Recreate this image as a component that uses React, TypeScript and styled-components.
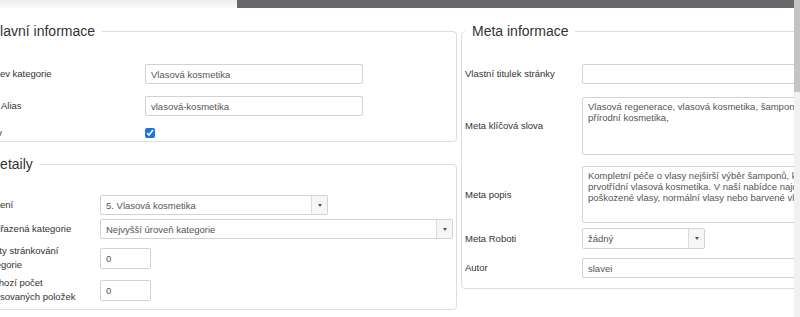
import styled, { createGlobalStyle } from "styled-components";

const GlobalStyle = createGlobalStyle`
  html, body {
    margin: 0;
    height: 100%;
    background: #fff;
    overflow: hidden;
  }
  body {
    font-family: "Liberation Sans", Arial, sans-serif;
    font-size: 9.5px;
    color: #333;
  }
`;

const Page = styled.div`
  display: flex;
  height: 317px;
`;

const Main = styled.div`
  flex: 1;
  min-width: 0;
  overflow: hidden;
`;

const TopBar = styled.div`
  display: flex;
  height: 8px;
`;

const TopFade = styled.div`
  width: 237px;
  background: linear-gradient(#ececec, #fbfbfb);
`;

const TopDark = styled.div`
  flex: 1;
  background: #68686c;
`;

const Columns = styled.div`
  display: grid;
  grid-template-columns: 478px 478px;
  column-gap: 4px;
  align-items: start;
  margin: 15px 0 0 -21px;
`;

const Column = styled.div`
  display: flex;
  flex-direction: column;
`;

const Panel = styled.fieldset<{ $mt?: number; $pb: number }>`
  margin: ${(p) => p.$mt ?? 0}px 0 0;
  padding: 0 3px ${(p) => p.$pb}px;
  border: 1px solid #dddddd;
  border-radius: 4px;
  min-width: 0;
`;

const Legend = styled.legend`
  padding: 0 7px;
  font-size: 14px;
  line-height: 16px;
  color: #333;
`;

const Row = styled.div<{ $label: number; $mt: number }>`
  display: grid;
  grid-template-columns: ${(p) => p.$label}px 1fr;
  align-items: center;
  margin-top: ${(p) => p.$mt}px;
`;

const Label = styled.label<{ $indent?: number }>`
  padding: 0 8px 0 ${(p) => p.$indent ?? 0}px;
  line-height: 14px;
  color: #333;
`;

const TextInput = styled.input<{ $w?: number; $h?: number }>`
  box-sizing: border-box;
  width: ${(p) => (p.$w ? `${p.$w}px` : "100%")};
  height: ${(p) => p.$h ?? 20}px;
  margin: 0;
  padding: 0 5px;
  border: 1px solid #d2d2d2;
  border-radius: 2px;
  background: #fff;
  font-family: inherit;
  font-size: 9.5px;
  color: #555;
  outline: none;
`;

const TextArea = styled.textarea<{ $h: number }>`
  box-sizing: border-box;
  display: block;
  width: 100%;
  height: ${(p) => p.$h}px;
  margin: 0;
  padding: 3px 5px;
  border: 1px solid #d2d2d2;
  border-radius: 2px;
  font-family: inherit;
  font-size: 9.5px;
  line-height: 11px;
  color: #555;
  resize: none;
  overflow: hidden;
  outline: none;
`;

const SelectBox = styled.div<{ $w?: number; $h?: number }>`
  box-sizing: border-box;
  display: flex;
  width: ${(p) => (p.$w ? `${p.$w}px` : "100%")};
  height: ${(p) => p.$h ?? 20}px;
  border: 1px solid #d2d2d2;
  border-radius: 2px;
  background: #fff;
  color: #555;
`;

const SelectValue = styled.span`
  flex: 1;
  display: flex;
  align-items: center;
  padding: 0 5px;
  white-space: nowrap;
  overflow: hidden;
`;

const SelectArrow = styled.span`
  width: 15px;
  display: flex;
  align-items: center;
  justify-content: center;
  border-left: 1px solid #dcdcdc;
  background: #f6f6f6;

  &::after {
    content: "";
    border-left: 2.5px solid transparent;
    border-right: 2.5px solid transparent;
    border-top: 3px solid #555;
  }
`;

const Check = styled.input`
  width: 10px;
  height: 10px;
  margin: 0;
  accent-color: #1a73e8;
`;

const Scrollbar = styled.div`
  width: 6px;
  background: #f1f1f1;
`;

const Thumb = styled.div`
  height: 92px;
  background: #c4c4c4;
`;

function Select({ value, w, h }: { value: string; w?: number; h?: number }) {
  return (
    <SelectBox $w={w} $h={h}>
      <SelectValue>{value}</SelectValue>
      <SelectArrow />
    </SelectBox>
  );
}

const keywords =
  "Vlasová regenerace, vlasová kosmetika, šampony, kondicionéry,\npřírodní kosmetika,";
const description =
  "Kompletní péče o vlasy nejširší výběr šamponů, kondicionérů a\nprvotřídní vlasová kosmetika. V naší nabídce najdete přípravky pro\npoškozené vlasy, normální vlasy nebo barvené vlasy.";

export default function App() {
  return (
    <>
      <GlobalStyle />
      <Page>
        <Main>
          <TopBar>
            <TopFade />
            <TopDark />
          </TopBar>
          <Columns>
            <Column>
              <Panel $pb={1}>
                <Legend>Hlavní informace</Legend>
                <Row $label={162} $mt={25}>
                  <Label>Název kategorie</Label>
                  <TextInput $w={218} defaultValue="Vlasová kosmetika" />
                </Row>
                <Row $label={162} $mt={12}>
                  <Label $indent={18}>Alias</Label>
                  <TextInput $w={218} defaultValue="vlasová-kosmetika" />
                </Row>
                <Row $label={162} $mt={10}>
                  <Label>Stav</Label>
                  <Check type="checkbox" defaultChecked />
                </Row>
              </Panel>
              <Panel $mt={14} $pb={5}>
                <Legend>Detaily</Legend>
                <Row $label={117} $mt={23}>
                  <Label>Řazení</Label>
                  <Select w={228} value="5. Vlasová kosmetika" />
                </Row>
                <Row $label={117} $mt={4}>
                  <Label>Nadřazená kategorie</Label>
                  <Select value="Nejvyšší úroveň kategorie" />
                </Row>
                <Row $label={117} $mt={5}>
                  <Label>Počty stránkování kategorie</Label>
                  <TextInput $w={51} $h={21} defaultValue="0" />
                </Row>
                <Row $label={117} $mt={4}>
                  <Label>Výchozí počet vypisovaných položek</Label>
                  <TextInput $w={51} $h={21} defaultValue="0" />
                </Row>
              </Panel>
            </Column>
            <Panel $pb={10}>
              <Legend>Meta informace</Legend>
              <Row $label={117} $mt={25}>
                <Label>Vlastní titulek stránky</Label>
                <TextInput />
              </Row>
              <Row $label={117} $mt={13}>
                <Label>Meta klíčová slova</Label>
                <TextArea $h={58} defaultValue={keywords} />
              </Row>
              <Row $label={117} $mt={11}>
                <Label>Meta popis</Label>
                <TextArea $h={57} defaultValue={description} />
              </Row>
              <Row $label={117} $mt={5}>
                <Label>Meta Roboti</Label>
                <Select w={123} h={21} value="žádný" />
              </Row>
              <Row $label={117} $mt={9}>
                <Label>Autor</Label>
                <TextInput defaultValue="slavei" />
              </Row>
            </Panel>
          </Columns>
        </Main>
        <Scrollbar>
          <Thumb />
        </Scrollbar>
      </Page>
    </>
  );
}
